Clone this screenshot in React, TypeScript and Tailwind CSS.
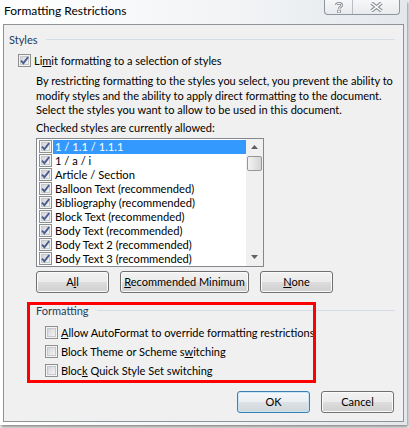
import { FC, ReactNode } from 'react';

const font = { fontFamily: 'Lato, "Liberation Sans", sans-serif' };

// Win7 style checkbox
const CheckBox: FC<{ checked?: boolean }> = ({ checked }) => (
  <svg width="13" height="13" viewBox="0 0 13 13" className="shrink-0">
    <defs>
      <linearGradient id="cb-fill" x1="0" y1="0" x2="1" y2="1">
        <stop offset="0" stopColor="#cfd2d6" />
        <stop offset="1" stopColor="#f7f7f7" />
      </linearGradient>
    </defs>
    <rect x="0.5" y="0.5" width="12" height="12" fill="#f4f4f4" stroke="#8e8f8f" />
    <rect x="2.5" y="2.5" width="8" height="8" fill="url(#cb-fill)" stroke="#c6c8cb" />
    {checked && (
      <path d="M3 6.6 L5.4 9.2 L10.2 3" fill="none" stroke="#4a5d8f" strokeWidth="1.9" />
    )}
  </svg>
);

const Button: FC<{ children: ReactNode; w: string; isDefault?: boolean }> = ({
  children,
  w,
  isDefault,
}) => (
  <div
    className={`${w} h-[22px] rounded-[3px] border flex items-center justify-center text-[11px] text-black ${
      isDefault
        ? 'border-[#3c7fb1] shadow-[inset_0_0_0_1px_#c9e6f7] bg-[linear-gradient(to_bottom,#f4f8fb_0%,#eceff2_50%,#dde2e6_50%,#d1d6da_100%)]'
        : 'border-[#707070] shadow-[inset_0_0_0_1px_#fbfbfb] bg-[linear-gradient(to_bottom,#f2f2f2_0%,#ebebeb_50%,#dddddd_50%,#cfcfcf_100%)]'
    }`}
  >
    <span className="whitespace-nowrap leading-none">{children}</span>
  </div>
);

const GroupHeader: FC<{ label: string }> = ({ label }) => (
  <div className="flex items-center h-[14px] mr-[8px]">
    <span className="text-[11px] text-[#1e3a5c] leading-none">{label}</span>
    <div className="flex-1 h-px bg-[#d6dde4] ml-[8px]" />
  </div>
);

const styles = [
  '1 / 1.1 / 1.1.1',
  '1 / a / i',
  'Article / Section',
  'Balloon Text (recommended)',
  'Bibliography (recommended)',
  'Block Text (recommended)',
  'Body Text (recommended)',
  'Body Text 2 (recommended)',
  'Body Text 3 (recommended)',
];

const StyleList: FC = () => (
  <div className="ml-[32px] w-[228px] h-[129px] border border-[#828790] bg-white flex">
    <div className="flex-1 flex flex-col pt-px">
      {styles.map((s, i) => (
        <div key={s} className="flex items-center h-[14px]">
          <div className="pl-[2px] pr-[1px]">
            <CheckBox checked />
          </div>
          <div
            className={`flex-1 h-[14px] flex items-center pl-[2px] text-[11.2px] leading-none whitespace-nowrap ${
              i === 0 ? 'bg-[#3399ff] text-white' : 'text-black'
            }`}
          >
            {s}
          </div>
        </div>
      ))}
    </div>
    {/* scrollbar */}
    <div className="w-[17px] bg-[#f0f0f0] flex flex-col items-center">
      <div className="h-[17px] flex items-center justify-center">
        <svg width="7" height="4" viewBox="0 0 7 4">
          <path d="M0 4 L3.5 0 L7 4 Z" fill="#606060" />
        </svg>
      </div>
      <div className="w-[15px] h-[15px] rounded-[2px] border border-[#979797] bg-[linear-gradient(to_right,#f3f3f3,#e4e4e4_50%,#d4d4d4)]" />
      <div className="flex-1" />
      <div className="h-[17px] flex items-center justify-center">
        <svg width="7" height="4" viewBox="0 0 7 4">
          <path d="M0 0 L3.5 4 L7 0 Z" fill="#606060" />
        </svg>
      </div>
    </div>
  </div>
);

const TitleButtons: FC = () => (
  <div className="flex h-[15px] border border-t-0 border-[#8f959c] rounded-b-[4px] bg-[linear-gradient(to_bottom,#f6f7f8,#e8eaed)] mr-[4px]">
    <div className="w-[28px] flex items-center justify-center border-r border-[#b9bec4]">
      <svg width="8" height="11" viewBox="0 0 8 11">
        <path
          d="M1.3 3 C1.3 0.8 6.7 0.8 6.7 3.2 C6.7 5 4 5 4 7"
          fill="none"
          stroke="#8a8f96"
          strokeWidth="2.6"
        />
        <path
          d="M1.3 3 C1.3 0.8 6.7 0.8 6.7 3.2 C6.7 5 4 5 4 7"
          fill="none"
          stroke="#fdfdfd"
          strokeWidth="1"
        />
        <rect x="2.6" y="8.2" width="2.8" height="2.6" fill="#fdfdfd" stroke="#8a8f96" strokeWidth="0.8" />
      </svg>
    </div>
    <div className="w-[46px] flex items-center justify-center">
      <svg width="13" height="10" viewBox="0 0 13 10">
        <path d="M1.5 1 L11.5 9 M11.5 1 L1.5 9" stroke="#8a8f96" strokeWidth="3.6" />
        <path d="M1.5 1 L11.5 9 M11.5 1 L1.5 9" stroke="#fdfdfd" strokeWidth="1.6" />
      </svg>
    </div>
  </div>
);

const App: FC = () => {
  return (
    <div className="w-[409px] h-[428px] bg-[#f7f7f7] overflow-hidden" style={font}>
      <div className="w-[407px] h-[425px] flex flex-col bg-[linear-gradient(to_right,#ffffff,#f1f3f5_60%,#e4e8ec)] shadow-[1px_2px_3px_rgba(0,0,0,0.45)] px-[3px] pb-[3px]">
        {/* title bar */}
        <div className="h-[24px] flex justify-between shrink-0">
          <span className="text-[12px] text-black leading-none pt-[5px] pl-[1px]">
            Formatting Restrictions
          </span>
          <TitleButtons />
        </div>

        {/* client area */}
        <div className="relative flex-1 border border-[#8e9398] bg-[#f0f0f0] flex flex-col text-[11px] text-black">
          <div className="mt-[7px] pl-[5px]">
            <GroupHeader label="Styles" />
          </div>

          <div className="mt-[7px] ml-[14px] h-[14px] flex items-center gap-[3px]">
            <CheckBox checked />
            <span className="leading-none whitespace-nowrap">
              Li<u>m</u>it formatting to a selection of styles
            </span>
          </div>

          <p className="mt-[7px] ml-[32px] leading-[14.5px] whitespace-nowrap">
            By restricting formatting to the styles you select, you prevent the ability to
            <br />
            modify styles and the ability to apply direct formatting to the document.
            <br />
            Select the styles you want to allow to be used in this document.
          </p>

          <div className="mt-[3px] ml-[32px] h-[14px] flex items-center leading-none">
            Checked styles are currently allowed:
          </div>

          <div className="mt-[3px]">
            <StyleList />
          </div>

          <div className="mt-[4px] ml-[32px] flex gap-[11px]">
            <Button w="w-[73px]">
              A<u>l</u>l
            </Button>
            <Button w="w-[129px]">
              <u>R</u>ecommended Minimum
            </Button>
            <Button w="w-[73px]">
              <u>N</u>one
            </Button>
          </div>

          <div className="mt-[11px] pl-[32px]">
            <GroupHeader label="Formatting" />
          </div>

          <div className="mt-[5px] ml-[41px] flex flex-col">
            <div className="h-[19px] flex items-center gap-[3px]">
              <CheckBox />
              <span className="leading-none whitespace-nowrap">
                <u>A</u>llow AutoFormat to override formatting restrictions
              </span>
            </div>
            <div className="h-[19px] flex items-center gap-[3px]">
              <CheckBox />
              <span className="leading-none whitespace-nowrap">
                Block Theme or Scheme s<u>w</u>itching
              </span>
            </div>
            <div className="h-[19px] flex items-center gap-[3px]">
              <CheckBox />
              <span className="leading-none whitespace-nowrap">
                Bloc<u>k</u> Quick Style Set switching
              </span>
            </div>
          </div>

          <div className="mt-[11px] mr-[9px] flex justify-end gap-[11px]">
            <Button w="w-[73px]" isDefault>
              OK
            </Button>
            <Button w="w-[73px]">Cancel</Button>
          </div>

          {/* red annotation box */}
          <div className="absolute left-[23px] top-[277px] w-[289px] h-[81px] border-[3px] border-[#ff0000]" />
        </div>
      </div>
    </div>
  );
};

export default App;
